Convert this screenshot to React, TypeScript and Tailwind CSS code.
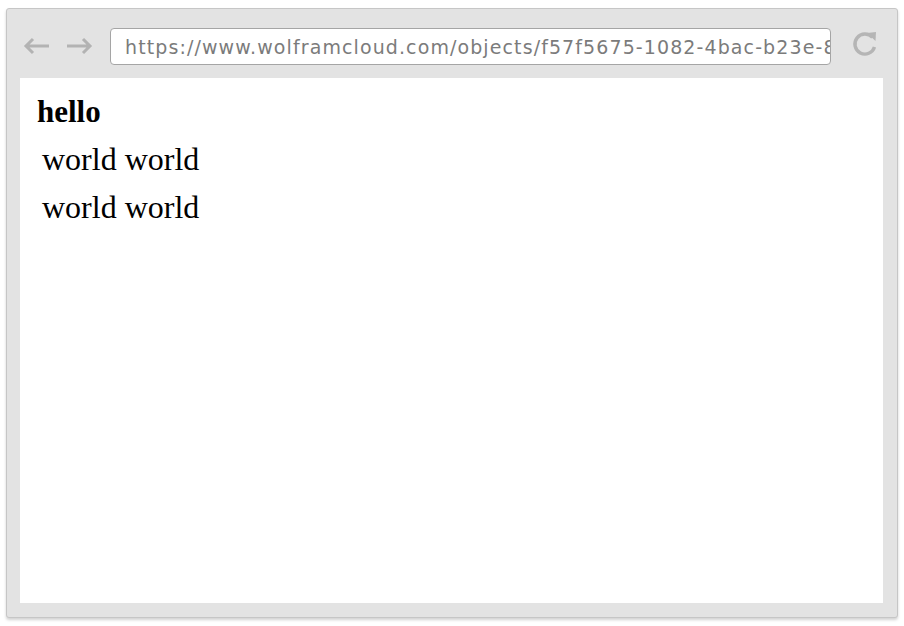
import React from "react";

function BackArrow() {
  return (
    <svg width="30" height="20" viewBox="0 0 30 20" fill="none">
      <path d="M27 10 H4 M11 3 L4 10 L11 17" stroke="#b3b3b3" strokeWidth="3" strokeLinecap="butt" strokeLinejoin="miter" />
    </svg>
  );
}

function ForwardArrow() {
  return (
    <svg width="30" height="20" viewBox="0 0 30 20" fill="none">
      <path d="M3 10 H26 M19 3 L26 10 L19 17" stroke="#b3b3b3" strokeWidth="3" strokeLinecap="butt" strokeLinejoin="miter" />
    </svg>
  );
}

function Reload() {
  return (
    <svg width="28" height="28" viewBox="0 0 28 28" fill="none">
      <path d="M21.5 7.5 A10 10 0 1 0 23.5 17" stroke="#b5b5b5" strokeWidth="3.4" fill="none" />
      <path d="M16 3 L25 2 L24.5 11 Z" fill="#b5b5b5" />
    </svg>
  );
}

export default function App() {
  return (
    <div className="w-[904px] h-[626px] bg-white pt-[8px] pl-[6px]">
      <div className="w-[892px] h-[610px] bg-[#e3e3e3] border border-[#c6c6c6] rounded-[3px] shadow-[0_2px_3px_rgba(0,0,0,0.18)] flex flex-col">
        <div className="h-[69px] flex items-start">
          <div className="flex items-center mt-[27px] ml-[15px] gap-[12px] h-[20px]">
            <BackArrow />
            <ForwardArrow />
          </div>
          <div className="ml-[16px] mt-[19px] w-[721px] h-[37px] bg-white border border-[#a5a5a5] rounded-[4px] flex items-center overflow-hidden">
            <span
              className="pl-[14px] pt-[2px] whitespace-nowrap text-[19px] tracking-[1.1px] text-[#7b7b7b] leading-none"
              style={{ fontFamily: '"DejaVu Sans", Verdana, sans-serif' }}
            >
              https://www.wolframcloud.com/objects/f57f5675-1082-4bac-b23e-8c2a
            </span>
          </div>
          <div className="ml-[20px] mt-[21px]">
            <Reload />
          </div>
        </div>
        <div
          className="ml-[13px] mr-[14px] mb-[14px] flex-1 bg-white pt-[11px] pl-[17px] text-black"
          style={{ fontFamily: '"Liberation Serif", "Times New Roman", serif' }}
        >
          <div className="font-bold text-[31px] leading-[46px]">hello</div>
          <div className="text-[32px] leading-[48px] pl-[5px]">world world</div>
          <div className="text-[32px] leading-[48px] pl-[5px]">world world</div>
        </div>
      </div>
    </div>
  );
}
